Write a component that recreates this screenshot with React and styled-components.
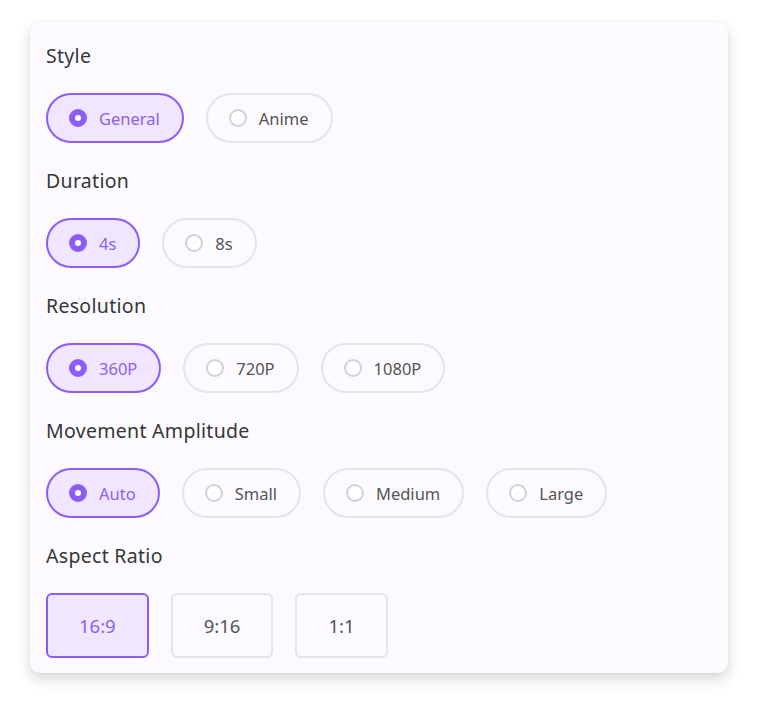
import React, { useState } from 'react'
import styled, { createGlobalStyle } from 'styled-components'

const GlobalStyle = createGlobalStyle`
  body {
    margin: 0;
    background: #ffffff;
    font-family: "Noto Sans", "Open Sans", sans-serif;
  }
`

const Page = styled.div`
  padding: 22px 30px 38px 30px;
`

const Card = styled.div`
  background: #fcfaff;
  border-radius: 10px;
  box-shadow: 0 6px 14px rgba(0, 0, 0, 0.16), 0 0 3px rgba(0, 0, 0, 0.05);
  padding: 22px 16px 15px 16px;
  display: flex;
  flex-direction: column;
  gap: 26px;
`

const Section = styled.div`
  display: flex;
  flex-direction: column;
  gap: 25px;
`

const Title = styled.div`
  font-size: 19.5px;
  line-height: 24px;
  letter-spacing: 0.3px;
  color: #363636;
  font-weight: 400;
`

const Options = styled.div`
  display: flex;
  gap: 22px;
`

const Pill = styled.button`
  height: 50px;
  box-sizing: border-box;
  display: flex;
  align-items: center;
  gap: 12px;
  padding: 0 22px 0 21px;
  border-radius: 25px;
  border: 2px solid ${p => (p.$active ? '#8b5cf6' : '#e6e4ea')};
  background: ${p => (p.$active ? '#f1e6ff' : 'transparent')};
  color: ${p => (p.$active ? '#8d5ef2' : '#555555')};
  font-family: inherit;
  font-size: 16.5px;
  cursor: pointer;
`

const Dot = styled.span`
  width: 18px;
  height: 18px;
  box-sizing: border-box;
  border-radius: 50%;
  border: ${p => (p.$active ? '6px solid #8b5cf6' : '2.5px solid #d2d2d6')};
  background: #ffffff;
`

const Ratio = styled.button`
  height: 65px;
  box-sizing: border-box;
  padding: 0 31px;
  border-radius: 6px;
  border: 2px solid ${p => (p.$active ? '#8b5cf6' : '#e6e4ea')};
  background: ${p => (p.$active ? '#f1e6ff' : 'transparent')};
  color: ${p => (p.$active ? '#8d5ef2' : '#555555')};
  font-family: inherit;
  font-size: 18.5px;
  cursor: pointer;
`

const groups = [
  { title: 'Style', options: ['General', 'Anime'] },
  { title: 'Duration', options: ['4s', '8s'] },
  { title: 'Resolution', options: ['360P', '720P', '1080P'] },
  { title: 'Movement Amplitude', options: ['Auto', 'Small', 'Medium', 'Large'] },
]

const ratios = ['16:9', '9:16', '1:1']

function RadioGroup({ title, options }) {
  const [value, setValue] = useState(options[0])
  return (
    <Section>
      <Title>{title}</Title>
      <Options>
        {options.map(o => (
          <Pill key={o} $active={o === value} onClick={() => setValue(o)}>
            <Dot $active={o === value} />
            {o}
          </Pill>
        ))}
      </Options>
    </Section>
  )
}

export default function App() {
  const [ratio, setRatio] = useState('16:9')
  return (
    <Page>
      <GlobalStyle />
      <Card>
        {groups.map(g => (
          <RadioGroup key={g.title} title={g.title} options={g.options} />
        ))}
        <Section>
          <Title>Aspect Ratio</Title>
          <Options>
            {ratios.map(r => (
              <Ratio key={r} $active={r === ratio} onClick={() => setRatio(r)}>
                {r}
              </Ratio>
            ))}
          </Options>
        </Section>
      </Card>
    </Page>
  )
}
